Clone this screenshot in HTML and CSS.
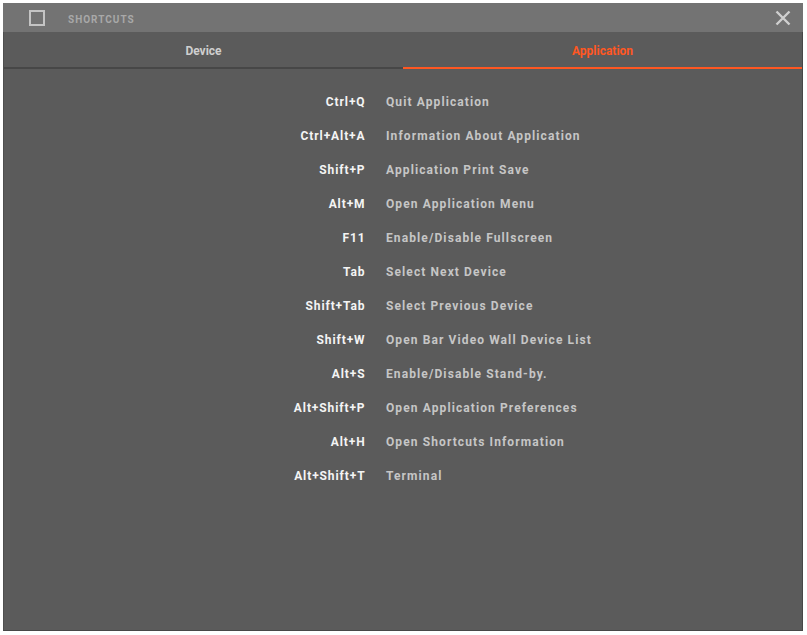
FILE: index.html
```html
<!DOCTYPE html>
<html>
<head>
<meta charset="utf-8">
<link rel="stylesheet" href="styles.css">
</head>
<body>
<div class="window">
  <div class="titlebar">
    <span class="check"></span>
    <span class="title">SHORTCUTS</span>
    <svg class="close" width="16" height="16" viewBox="0 0 16 16"><path d="M1.5 1.5 L14.5 14.5 M14.5 1.5 L1.5 14.5" stroke="#cfcfcf" stroke-width="2.4" fill="none"/></svg>
  </div>
  <div class="tabs">
    <div class="tab">Device</div>
    <div class="tab active">Application</div>
  </div>
  <div class="list">
    <div class="key">Ctrl+Q</div><div class="desc">Quit Application</div>
    <div class="key">Ctrl+Alt+A</div><div class="desc">Information About Application</div>
    <div class="key">Shift+P</div><div class="desc">Application Print Save</div>
    <div class="key">Alt+M</div><div class="desc">Open Application Menu</div>
    <div class="key">F11</div><div class="desc">Enable/Disable Fullscreen</div>
    <div class="key">Tab</div><div class="desc">Select Next Device</div>
    <div class="key">Shift+Tab</div><div class="desc">Select Previous Device</div>
    <div class="key">Shift+W</div><div class="desc">Open Bar Video Wall Device List</div>
    <div class="key">Alt+S</div><div class="desc">Enable/Disable Stand-by.</div>
    <div class="key">Alt+Shift+P</div><div class="desc">Open Application Preferences</div>
    <div class="key">Alt+H</div><div class="desc">Open Shortcuts Information</div>
    <div class="key">Alt+Shift+T</div><div class="desc">Terminal</div>
  </div>
</div>
</body>
</html>
```
FILE: styles.css
```css
html, body {
  margin: 0;
  padding: 0;
  background: #ffffff;
}
body {
  font-family: Roboto, "Liberation Sans", sans-serif;
}
.window {
  margin: 3px;
  width: 800px;
  height: 628px;
  box-sizing: border-box;
  background: #5b5b5b;
  border-right: 1px solid #474747;
  border-bottom: 1px solid #474747;
  border-left: 1px solid #4f4f4f;
  display: flex;
  flex-direction: column;
}
.titlebar {
  height: 29px;
  background: #737373;
  display: flex;
  align-items: center;
  padding-left: 26px;
  padding-right: 12px;
  margin-left: -1px;
  margin-right: -1px;
}
.check {
  width: 16px;
  height: 16px;
  box-sizing: border-box;
  border: 2px solid #c4c4c4;
  margin-top: 1px;
}
.title {
  margin-left: 23px;
  margin-top: 3px;
  font-size: 10px;
  font-weight: 700;
  letter-spacing: 1px;
  color: #a8a8a8;
  flex: 1;
}
.close {
  display: block;
  margin-top: 1px;
}
.tabs {
  display: flex;
  height: 37px;
}
.tab {
  flex: 1;
  box-sizing: border-box;
  border-bottom: 2px solid #474747;
  display: flex;
  align-items: center;
  justify-content: center;
  font-size: 12px;
  font-weight: 700;
  color: #cfcfcf;
  padding-top: 2px;
}
.tab.active {
  color: #ff5722;
  border-bottom-color: #ff5722;
}
.list {
  display: grid;
  grid-template-columns: 361px 1fr;
  column-gap: 21px;
  grid-auto-rows: 34px;
  padding-top: 16px;
  font-size: 12px;
  font-weight: 700;
}
.key, .desc {
  display: flex;
  align-items: center;
}
.key {
  justify-content: flex-end;
  color: #f4f4f4;
  letter-spacing: 0.9px;
  margin-right: -0.5px;
}
.desc {
  color: #c6c6c6;
  letter-spacing: 1.1px;
}
```
